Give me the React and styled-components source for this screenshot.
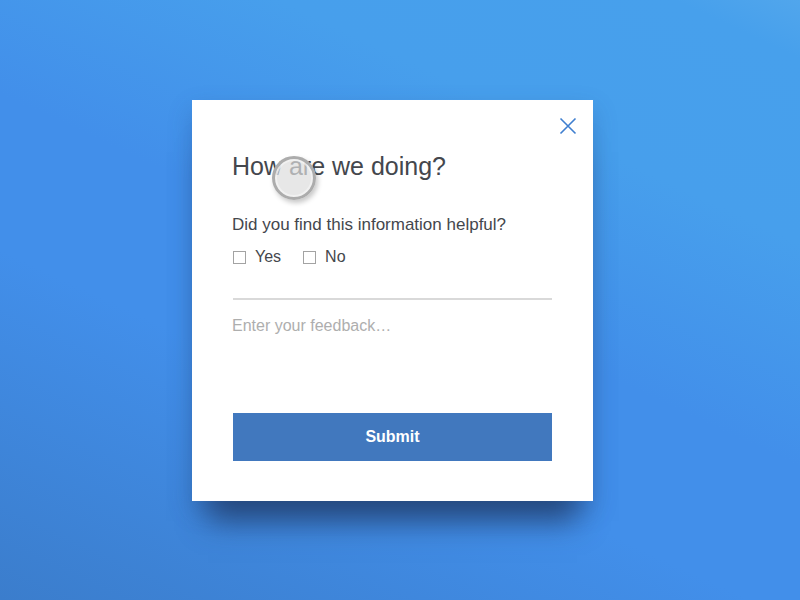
import styled, { createGlobalStyle } from 'styled-components';

const GlobalStyle = createGlobalStyle`
  *, *::before, *::after {
    box-sizing: border-box;
  }

  body {
    margin: 0;
    font-family: "Liberation Sans", Arial, sans-serif;
    color: #44474d;
  }
`;

const Page = styled.main`
  min-height: 100vh;
  display: flex;
  justify-content: center;
  align-items: flex-start;
  padding: 100px 15px 60px 0;
  background: linear-gradient(25deg, #3b7dcc 0%, #428fea 36%, #428fea 52%, #479fec 75%, #47a0ec 94%, #51a6ec 100%);
`;

const Card = styled.section`
  position: relative;
  width: 100%;
  max-width: 401px;
  padding: 50px 41px 40px;
  background: #fff;
  box-shadow: 0 36px 28px -16px rgba(34, 64, 112, 0.85), 0 10px 22px rgba(35, 75, 140, 0.3);
`;

const CloseButton = styled.button`
  position: absolute;
  top: 16px;
  right: 15px;
  width: 20px;
  height: 20px;
  padding: 0;
  border: 0;
  background: transparent;
  color: #3f7fcf;
  cursor: pointer;

  svg {
    display: block;
  }
`;

const Title = styled.h1`
  margin: 0 0 0 -1px;
  font-size: 25px;
  line-height: 32px;
  font-weight: 400;
`;

const Form = styled.form`
  display: flex;
  flex-direction: column;
`;

const Question = styled.fieldset`
  margin: 0;
  padding: 33px 0 31px;
  border: 0;
  border-bottom: 2px solid #d9d9d9;
`;

const Legend = styled.legend`
  float: left;
  width: 100%;
  margin: 0 0 12px -1px;
  padding: 0;
  font-size: 17px;
  line-height: 20px;
`;

const Options = styled.div`
  clear: both;
  display: flex;
  gap: 22px;
`;

const Option = styled.label`
  display: flex;
  align-items: center;
  gap: 9px;
  font-size: 16px;
  line-height: 20px;
  cursor: pointer;
`;

const Checkbox = styled.input`
  appearance: none;
  width: 13px;
  height: 13px;
  margin: 0;
  border: 1px solid #a3a3a3;
  background: #fff;

  &:checked {
    background: #4178be;
  }
`;

const Feedback = styled.textarea`
  height: 97px;
  margin: 16px 0 0 -1px;
  padding: 0;
  border: 0;
  outline: 0;
  resize: none;
  font: 16px/20px "Liberation Sans", Arial, sans-serif;
  color: inherit;

  &::placeholder {
    color: #aeaeae;
    opacity: 1;
  }
`;

const SubmitButton = styled.button`
  height: 48px;
  padding: 0;
  border: 0;
  background: #4178be;
  color: #fff;
  font: 700 16px/20px "Liberation Sans", Arial, sans-serif;
  cursor: pointer;
`;

// touch pointer, floats above the dialog
const Pointer = styled.div`
  position: absolute;
  top: 56px;
  left: 80px;
  width: 44px;
  height: 44px;
  border: 3px solid #acacac;
  border-radius: 50%;
  background: rgba(221, 221, 221, 0.7);
  box-shadow: inset 0 0 0 2px rgba(245, 245, 245, 0.7), 2px 3px 5px rgba(0, 0, 0, 0.22);
  pointer-events: none;
`;

const answers = ['Yes', 'No'];

const App = () => {
  return (
    <>
      <GlobalStyle />
      <Page>
        <Card aria-labelledby="title">
          <CloseButton type="button" aria-label="Close">
            <svg width="20" height="20" viewBox="0 0 20 20" fill="none" stroke="currentColor" strokeWidth="1.6">
              <path d="M2.5 2.5L17.5 17.5M17.5 2.5L2.5 17.5" />
            </svg>
          </CloseButton>
          <Title id="title">How are we doing?</Title>
          <Form onSubmit={(e) => e.preventDefault()}>
            <Question>
              <Legend>Did you find this information helpful?</Legend>
              <Options>
                {answers.map((answer) => (
                  <Option key={answer}>
                    <Checkbox type="checkbox" name="helpful" value={answer} />
                    {answer}
                  </Option>
                ))}
              </Options>
            </Question>
            <Feedback aria-label="Feedback" placeholder="Enter your feedback…" />
            <SubmitButton type="submit">Submit</SubmitButton>
          </Form>
          <Pointer />
        </Card>
      </Page>
    </>
  );
};

export default App;
